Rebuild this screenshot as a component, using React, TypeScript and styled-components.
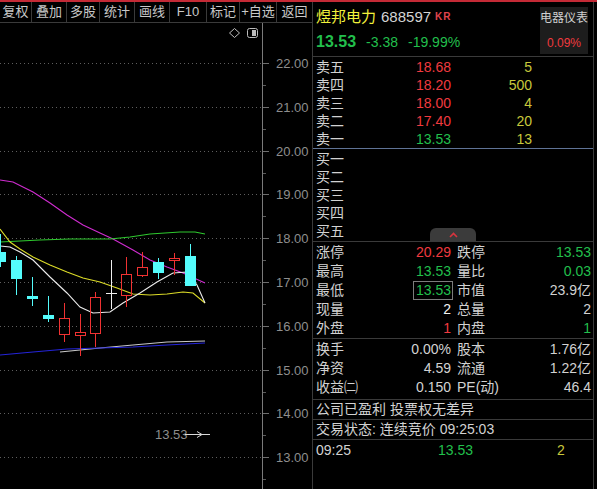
import React from "react";
import styled, { createGlobalStyle } from "styled-components";

const FONT = `"Liberation Sans", "Noto Sans CJK SC", sans-serif`;
const RED = "#f03a3f";
const GREEN = "#22bf4c";
const YELLOW = "#c8c83c";
const TEXT = "#d2d2d2";
const LINE = "#3a3a3a";

const GlobalStyle = createGlobalStyle`
  html, body {
    margin: 0;
    padding: 0;
    background: #000;
  }
  * {
    box-sizing: border-box;
  }
`;

const tools = [
    { label: "复权", w: 32 },
    { label: "叠加", w: 35 },
    { label: "多股", w: 33 },
    { label: "统计", w: 35 },
    { label: "画线", w: 35 },
    { label: "F10", w: 37 },
    { label: "标记", w: 33 },
    { label: "+自选", w: 37 },
    { label: "返回", w: 35 },
];

const asks = [
    { label: "卖五", price: "18.68", vol: "5", up: true },
    { label: "卖四", price: "18.20", vol: "500", up: true },
    { label: "卖三", price: "18.00", vol: "4", up: true },
    { label: "卖二", price: "17.40", vol: "20", up: true },
    { label: "卖一", price: "13.53", vol: "13", up: false },
];

const bids = ["买一", "买二", "买三", "买四", "买五"];

type Stat = { label: string; value: string; color?: string; boxed?: boolean };

const stats: Stat[][] = [
    [{ label: "涨停", value: "20.29", color: RED }, { label: "跌停", value: "13.53", color: GREEN }],
    [{ label: "最高", value: "13.53", color: GREEN }, { label: "量比", value: "0.03", color: GREEN }],
    [{ label: "最低", value: "13.53", color: GREEN, boxed: true }, { label: "市值", value: "23.9亿" }],
    [{ label: "现量", value: "2", color: "#f2f2f2" }, { label: "总量", value: "2" }],
    [{ label: "外盘", value: "1", color: RED }, { label: "内盘", value: "1", color: GREEN }],
];

const fundamentals: Stat[][] = [
    [{ label: "换手", value: "0.00%" }, { label: "股本", value: "1.76亿" }],
    [{ label: "净资", value: "4.59" }, { label: "流通", value: "1.22亿" }],
    [{ label: "收益㈡", value: "0.150" }, { label: "PE(动)", value: "46.4" }],
];

// price axis: 22.00 sits at y=63, 43.8px per yuan
const priceY = (p: number) => 63 + (22 - p) * 43.8;
const axisPrices = [22, 21, 20, 19, 18, 17, 16, 15, 14, 13];

type Candle = { x: number; top: number; bottom: number; hi: number; lo: number; kind: "up" | "down" | "doji" };

const candles: Candle[] = [
    { x: 0, top: 252, bottom: 262, hi: 234, lo: 267, kind: "down" },
    { x: 16, top: 260, bottom: 279, hi: 256, lo: 295, kind: "down" },
    { x: 32, top: 296, bottom: 299, hi: 277, lo: 306, kind: "down" },
    { x: 48, top: 315, bottom: 319, hi: 296, lo: 322, kind: "down" },
    { x: 64, top: 318, bottom: 334, hi: 303, lo: 342, kind: "up" },
    { x: 80, top: 332, bottom: 335, hi: 314, lo: 356, kind: "up" },
    { x: 95, top: 297, bottom: 333, hi: 292, lo: 347, kind: "up" },
    { x: 111, top: 293, bottom: 293, hi: 260, lo: 309, kind: "doji" },
    { x: 126, top: 274, bottom: 295, hi: 257, lo: 307, kind: "up" },
    { x: 142, top: 267, bottom: 275, hi: 252, lo: 277, kind: "up" },
    { x: 158, top: 262, bottom: 273, hi: 258, lo: 279, kind: "down" },
    { x: 174, top: 258, bottom: 260, hi: 253, lo: 275, kind: "up" },
    { x: 190, top: 256, bottom: 286, hi: 244, lo: 286, kind: "down" },
];

const averages = [
    { color: "#d02cd0", pts: [[0, 180], [13, 182], [33, 192], [50, 203], [67, 215], [83, 225], [100, 233], [113, 239], [133, 250], [150, 260], [167, 267], [183, 273], [205, 283]] },
    { color: "#2ec82e", pts: [[0, 242], [20, 241], [40, 240], [70, 239], [110, 239], [130, 237], [150, 234], [180, 232], [195, 232], [205, 234]] },
    { color: "#dcdc28", pts: [[0, 229], [10, 242], [20, 249], [33, 257], [50, 265], [67, 272], [83, 278], [100, 282], [117, 288], [133, 294], [150, 295], [167, 294], [183, 292], [193, 293], [205, 303]] },
    { color: "#ececec", pts: [[0, 246], [10, 247], [20, 252], [33, 260], [50, 277], [67, 293], [80, 307], [93, 313], [110, 312], [123, 303], [140, 293], [157, 282], [173, 273], [187, 272], [197, 285], [205, 303]] },
    { color: "#c8c8c8", pts: [[60, 352], [100, 348], [133, 345], [167, 342], [205, 341]] },
    { color: "#2424d8", pts: [[0, 355], [33, 352], [67, 349], [100, 348], [133, 347], [167, 345], [205, 343]] },
];

function CandleMark({ c }: { c: Candle }) {
    const wx = c.x + 0.5;
    if (c.kind === "down") {
        return (
            <g>
                <line x1={wx} x2={wx} y1={c.hi} y2={c.lo} stroke="#54fcfc" />
                <rect x={c.x - 5} y={c.top} width={11} height={Math.max(c.bottom - c.top, 1)} fill="#54fcfc" />
            </g>
        );
    }
    if (c.kind === "doji") {
        return (
            <g stroke="#f0f0f0">
                <line x1={wx} x2={wx} y1={c.hi} y2={c.lo} />
                <line x1={c.x - 5} x2={c.x + 6} y1={c.top + 0.5} y2={c.top + 0.5} />
            </g>
        );
    }
    return (
        <g stroke="#f03232" fill="none">
            <line x1={wx} x2={wx} y1={c.hi} y2={c.top} />
            <line x1={wx} x2={wx} y1={c.bottom} y2={c.lo} />
            <rect x={c.x - 4.5} y={c.top + 0.5} width={10} height={c.bottom - c.top} />
        </g>
    );
}

function KChart() {
    return (
        <ChartSvg viewBox="0 23 312 466" width={312} height={466}>
            {axisPrices.map((p) => {
                const y = Math.round(priceY(p)) + 0.5;
                return (
                    <g key={p}>
                        <line x1={0} x2={262} y1={y} y2={y} stroke="#5e5e5e" strokeDasharray="1 3" />
                        <line x1={263} x2={269} y1={y} y2={y} stroke="#6e6e6e" />
                        <line x1={263} x2={266} y1={y + 22} y2={y + 22} stroke="#5a5a5a" />
                        <AxisText x={276} y={y + 4.5}>{p.toFixed(2)}</AxisText>
                    </g>
                );
            })}
            <line x1={262.5} x2={262.5} y1={23} y2={489} stroke="#7a7a7a" />

            <polygon points="234.5,28.5 239.5,33 234.5,37.5 229.5,33" fill="none" stroke="#bdbdbd" />
            <rect x={247.5} y={28.5} width={10} height={9} rx={2} fill="none" stroke="#bdbdbd" />
            <rect x={252} y={30} width={4} height={6} fill="#bdbdbd" />

            {averages.map((a, i) => (
                <polyline key={i} points={a.pts.map((p) => p.join(",")).join(" ")} fill="none" stroke={a.color} strokeWidth={1.1} />
            ))}
            {candles.map((c, i) => (
                <CandleMark key={i} c={c} />
            ))}

            <AxisText x={155} y={438.5} fill="#d8d8d8" fontSize={12}>13.53</AxisText>
            <line x1={185} x2={210} y1={434.5} y2={434.5} stroke="#d8d8d8" />
            <polyline points="197,431.5 202,434.5 197,437.5" fill="none" stroke="#d8d8d8" />
        </ChartSvg>
    );
}

function StatRow({ row }: { row: Stat[] }) {
    return (
        <StatGrid>
            {row.map((s) => (
                <StatCell key={s.label}>
                    <Label>{s.label}</Label>
                    <Value $color={s.color} $boxed={s.boxed}>{s.value}</Value>
                </StatCell>
            ))}
        </StatGrid>
    );
}

export default function App() {
    return (
        <Page>
            <GlobalStyle />
            <LeftColumn>
                <Toolbar>
                    {tools.map((t, i) => (
                        <ToolButton key={t.label} $w={t.w} $last={i === tools.length - 1}>
                            {t.label}
                        </ToolButton>
                    ))}
                </Toolbar>
                <KChart />
            </LeftColumn>

            <Panel>
                <Header>
                    <Quote>
                        <NameRow>
                            <Name>煜邦电力</Name>
                            <Code>688597</Code>
                            <Tag>KR</Tag>
                        </NameRow>
                        <PriceRow>
                            <Last>13.53</Last>
                            <Change>-3.38</Change>
                            <Change>-19.99%</Change>
                        </PriceRow>
                    </Quote>
                    <Sector>
                        <SectorName>电器仪表</SectorName>
                        <SectorChange>0.09%</SectorChange>
                    </Sector>
                </Header>

                <AskBook>
                    {asks.map((a) => (
                        <BookRow key={a.label}>
                            <Label>{a.label}</Label>
                            <BookPrice $color={a.up ? RED : GREEN}>{a.price}</BookPrice>
                            <BookVol>{a.vol}</BookVol>
                        </BookRow>
                    ))}
                </AskBook>

                <BidBook>
                    {bids.map((b) => (
                        <BookRow key={b}>
                            <Label>{b}</Label>
                        </BookRow>
                    ))}
                    <CollapseTab>
                        <svg width="9" height="6" viewBox="0 0 9 6">
                            <polyline points="1,5 4.5,1.5 8,5" fill="none" stroke="#d8343e" strokeWidth="1.6" />
                        </svg>
                    </CollapseTab>
                </BidBook>

                <StatSection>
                    {stats.map((row, i) => (
                        <StatRow key={i} row={row} />
                    ))}
                </StatSection>

                <FundSection>
                    {fundamentals.map((row, i) => (
                        <StatRow key={i} row={row} />
                    ))}
                </FundSection>

                <NoteRow>公司已盈利 投票权无差异</NoteRow>
                <NoteRow>交易状态: 连续竞价 09:25:03</NoteRow>

                <TickList>
                    <TickRow>
                        <span>09:25</span>
                        <TickValue $color={GREEN}>13.53</TickValue>
                        <TickValue $color={YELLOW}>2</TickValue>
                    </TickRow>
                </TickList>
            </Panel>
        </Page>
    );
}

const Page = styled.div`
    display: flex;
    width: 597px;
    height: 489px;
    background: #000;
    border-top: 2px solid #c42a36;
    font-family: ${FONT};
    color: ${TEXT};
    overflow: hidden;
`;

const LeftColumn = styled.div`
    width: 312px;
    display: flex;
    flex-direction: column;
`;

const Toolbar = styled.div`
    display: flex;
    height: 21px;
    border-bottom: 1px solid ${LINE};
`;

const ToolButton = styled.div<{ $w: number; $last?: boolean }>`
    width: ${(p) => p.$w}px;
    border-right: ${(p) => (p.$last ? "none" : `1px solid ${LINE}`)};
    text-align: center;
    font-size: 13px;
    line-height: 20px;
    color: #c8c8c8;
    white-space: nowrap;
`;

const ChartSvg = styled.svg`
    display: block;
    font-family: ${FONT};
`;

const AxisText = styled.text`
    font-size: 13px;
    fill: #8e8e8e;
`;

const Panel = styled.div`
    width: 282px;
    display: flex;
    flex-direction: column;
    border-left: 1px solid ${LINE};
    border-right: 1px solid ${LINE};
    font-size: 14px;
`;

const Header = styled.div`
    display: flex;
    justify-content: space-between;
    height: 55px;
    padding: 0 5px 0 3px;
    border-bottom: 1px solid ${LINE};
`;

const Quote = styled.div`
    display: flex;
    flex-direction: column;
`;

const NameRow = styled.div`
    display: flex;
    align-items: center;
    gap: 5px;
    margin-top: 4px;
    line-height: 20px;
`;

const Name = styled.span`
    font-size: 15px;
    color: #f2f23c;
`;

const Code = styled.span`
    font-size: 15px;
    color: #d4d4d4;
`;

const Tag = styled.span`
    align-self: flex-start;
    margin: 1px 0 0 -1px;
    font-size: 10px;
    font-weight: 700;
    color: #e0444c;
    letter-spacing: 1px;
`;

const PriceRow = styled.div`
    display: flex;
    align-items: baseline;
    gap: 10px;
    margin-top: 4px;
    line-height: 22px;
    color: ${GREEN};
`;

const Last = styled.span`
    font-size: 16px;
    font-weight: 700;
`;

const Change = styled.span`
    font-size: 14px;
`;

const Sector = styled.div`
    width: 48px;
    height: 47px;
    margin-top: 5px;
    display: flex;
    flex-direction: column;
    align-items: center;
    background: #1d1d1d;
`;

const SectorName = styled.span`
    font-size: 12px;
    line-height: 16px;
    margin-top: 3px;
    color: #cfcfcf;
    white-space: nowrap;
`;

const SectorChange = styled.span`
    font-size: 12px;
    line-height: 16px;
    margin-top: 9px;
    color: ${RED};
`;

const AskBook = styled.div`
    padding: 1px 0 0 3px;
    border-bottom: 1px solid #5f7396;
`;

const BidBook = styled.div`
    position: relative;
    padding: 1px 0 1px 3px;
    border-bottom: 1px solid ${LINE};
`;

const BookRow = styled.div`
    display: grid;
    grid-template-columns: 40px 95px 81px;
    height: 18px;
    line-height: 18px;
`;

const Label = styled.span`
    color: ${TEXT};
    white-space: nowrap;
`;

const BookPrice = styled.span<{ $color: string }>`
    text-align: right;
    color: ${(p) => p.$color};
`;

const BookVol = styled.span`
    text-align: right;
    color: ${YELLOW};
`;

const CollapseTab = styled.div`
    position: absolute;
    left: 117px;
    bottom: 0;
    width: 46px;
    height: 13px;
    display: flex;
    align-items: center;
    justify-content: center;
    background: #3b3b3b;
    border-radius: 6px 6px 0 0;
`;

const StatSection = styled.div`
    padding: 1px 0 0 3px;
    border-bottom: 1px solid ${LINE};

    & > div {
        height: 19px;
        line-height: 19px;
    }
`;

const FundSection = styled.div`
    padding: 1px 0 2px 3px;
    border-bottom: 1px solid ${LINE};

    & > div {
        height: 19px;
        line-height: 19px;
    }
`;

const StatGrid = styled.div`
    display: grid;
    grid-template-columns: 135px 134px;
    column-gap: 6px;
`;

const StatCell = styled.div`
    display: flex;
    justify-content: space-between;
    align-items: center;
`;

const Value = styled.span<{ $color?: string; $boxed?: boolean }>`
    color: ${(p) => p.$color || TEXT};
    ${(p) =>
        p.$boxed &&
        `
        border: 1px solid #7c7c7c;
        padding: 0 1px 0 2px;
        margin-right: -2px;
        line-height: 17px;
    `}
`;

const NoteRow = styled.div`
    height: 20px;
    line-height: 19px;
    padding-left: 3px;
    border-bottom: 1px solid ${LINE};
    white-space: nowrap;
`;

const TickList = styled.div`
    flex: 1;
    padding-left: 3px;
`;

const TickRow = styled.div`
    display: grid;
    grid-template-columns: 122px 119px 1fr;
    height: 21px;
    line-height: 21px;
`;

const TickValue = styled.span<{ $color: string }>`
    color: ${(p) => p.$color};
`;
